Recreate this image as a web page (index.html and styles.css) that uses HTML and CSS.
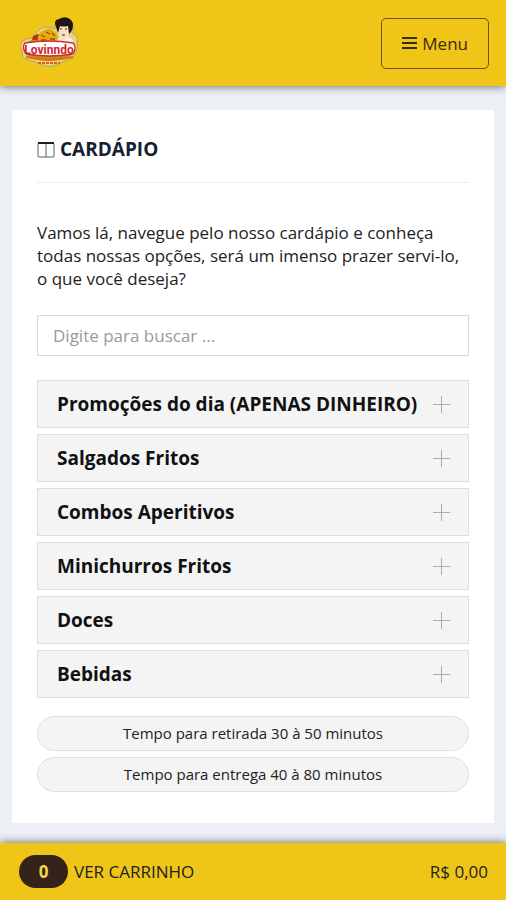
FILE: index.html
```
<!DOCTYPE html>
<html lang="pt-BR">
<head>
  <meta charset="UTF-8" />
  <meta name="viewport" content="width=device-width, initial-scale=1.0"/>
  <title>Cardápio</title>
  <link rel="stylesheet" href="styles.css">
</head>
<body>
  <header class="topbar">
    <svg class="logo" viewBox="0 0 60 54" role="img" aria-label="Lovinndo">
      <path d="M3 25 Q7 22 14 22 L17 17 Q22 10 31 11 L36 13 Q35 4 45 2 Q54 2 54 11 L54 18 Q60 20 58 27 Q60 32 56 37 Q56 42 49 44 L41 47 Q30 54 20 47 L9 44 Q3 42 3 36 Q0 30 3 25Z" fill="#e7d27e" stroke="#b3a464"/>
      <ellipse cx="30" cy="33" rx="26" ry="12" fill="#cf8a10"/>
      <path d="M14 20 L19 18 L23 19 L24 24 L13 24Z" fill="#a93c14"/>
      <path d="M19 26 Q18 16 24 15 Q30 10 35 15 Q40 18 39 26Z" fill="#e9a90b"/>
      <path d="M22 19 L26 21 M27 16 L31 18 M33 17 L36 20 M22 24 L27 24 M31 23 L36 23" stroke="#8d5308" stroke-width="1.3"/>
      <path d="M37 26 L40 21 L44 23 L49 20 L54 24 L54 28 L36 28Z" fill="#f7efe4"/>
      <path d="M39 10 Q44 7 50 10 L50 18 Q47 24 44 24 Q40 21 39 16Z" fill="#f6dfc6"/>
      <path d="M37 11 Q34 4 40 3 Q47 -1 52 4 Q56 9 52 16 L50 18 L49 10 Q44 11 41 10 L39 17Z" fill="#24130e"/>
      <path d="M41 13 h2 M46 13 h2 M43 19 h3" stroke="#4b2418" stroke-width="1"/>
      <path d="M6 27 Q30 23 54 27 Q58 31 54 38 Q30 42 8 38 Q2 32 6 27Z" fill="#fff" stroke="#cf2c27" stroke-width="1.3"/>
      <text class="logo-text" x="30" y="38" text-anchor="middle">Lovinndo</text>
      <path d="M7 41 Q30 46 54 41" fill="none" stroke="#c77d10" stroke-width="2"/>
      <path d="M19 47 H41" stroke="#e85d1a" stroke-width="2" stroke-dasharray="3 1"/>
    </svg>
    <button class="menu-btn" type="button">
      <svg class="menu-icon" viewBox="0 0 15 14" aria-hidden="true">
        <path d="M0 2H15M0 7H15M0 12H15" stroke="currentColor" stroke-width="2"/>
      </svg>
      Menu
    </button>
  </header>

  <main class="container">
    <section class="card">
      <h1 class="card-title">
        <svg class="title-icon" viewBox="0 0 18 18" aria-hidden="true">
          <rect x="1" y="2" width="16" height="14" rx="1" fill="none" stroke="#59616b"/>
          <path d="M9 2V16" stroke="#59616b"/>
          <path d="M1 2H17" stroke="#152033" stroke-width="2"/>
        </svg>
        CARDÁPIO
      </h1>

      <p class="intro">Vamos lá, navegue pelo nosso cardápio e conheça todas nossas opções, será um imenso prazer servi-lo, o que você deseja?</p>

      <input class="search" type="text" aria-label="Digite para buscar" placeholder="Digite para buscar ..." />

      <div class="categories">
        <button class="category" type="button">Promoções do dia (APENAS DINHEIRO)<span class="plus"></span></button>
        <button class="category" type="button">Salgados Fritos<span class="plus"></span></button>
        <button class="category" type="button">Combos Aperitivos<span class="plus"></span></button>
        <button class="category" type="button">Minichurros Fritos<span class="plus"></span></button>
        <button class="category" type="button">Doces<span class="plus"></span></button>
        <button class="category" type="button">Bebidas<span class="plus"></span></button>
      </div>

      <div class="times">
        <div class="time">Tempo para retirada 30 à 50 minutos</div>
        <div class="time">Tempo para entrega 40 à 80 minutos</div>
      </div>
    </section>
  </main>

  <footer class="cart-bar">
    <a class="cart-link" href="#"><span class="cart-count">0</span>VER CARRINHO</a>
    <span>R$ 0,00</span>
  </footer>
</body>
</html>
```
FILE: styles.css
```
* { box-sizing: border-box; }

body {
  margin: 0;
  min-height: 100vh;
  display: flex;
  flex-direction: column;
  font-family: 'Open Sans', sans-serif;
  font-size: 17px;
  color: #222;
  background: #ecf0f4;
}

button,
input {
  font-family: inherit;
  font-size: inherit;
}

.topbar {
  display: flex;
  align-items: center;
  justify-content: space-between;
  height: 86px;
  padding: 0 17px 0 19px;
  background: #efc518;
  box-shadow: 0 1px 8px rgba(0,0,0,0.5);
}

.logo {
  width: 60px;
  height: 54px;
}

.logo-text {
  font-family: Roboto, sans-serif;
  font-size: 12px;
  font-weight: 700;
  fill: #cf2430;
}

.menu-btn {
  display: flex;
  align-items: center;
  gap: 5px;
  height: 51px;
  padding: 0 20px;
  color: #3a2a10;
  background: transparent;
  border: 1px solid #6b5412;
  border-radius: 5px;
  cursor: pointer;
}

.menu-icon {
  width: 15px;
  height: 14px;
}

.container {
  flex: 1;
  padding: 24px 12px 20px;
}

.card {
  padding: 25px 25px 31px;
  background: white;
}

.card-title {
  display: flex;
  align-items: center;
  gap: 5px;
  margin: 0 0 38px;
  padding-bottom: 18px;
  font-size: 19px;
  line-height: 29px;
  color: #152033;
  border-bottom: 1px solid #eee;
}

.title-icon {
  width: 18px;
  height: 18px;
}

.intro {
  margin: 0 0 25px;
  line-height: 23px;
}

.search {
  display: block;
  width: 100%;
  height: 41px;
  margin-bottom: 24px;
  padding: 0 15px;
  border: 1px solid #d5d9dc;
}

.search::placeholder {
  color: #999;
}

.categories,
.times {
  display: flex;
  flex-direction: column;
  gap: 6px;
}

.category {
  display: flex;
  align-items: center;
  justify-content: space-between;
  height: 48px;
  padding: 0 18px 0 19px;
  font-size: 19px;
  font-weight: 700;
  text-align: left;
  color: #111;
  background: #f4f4f4;
  border: 1px solid #dfdfdf;
  cursor: pointer;
}

.plus {
  flex: none;
  width: 17px;
  height: 17px;
  background:
    linear-gradient(#aaa, #aaa) center / 17px 1px no-repeat,
    linear-gradient(#aaa, #aaa) center / 1px 17px no-repeat;
}

.times {
  margin-top: 18px;
}

.time {
  padding: 6px 15px;
  font-size: 15px;
  line-height: 21px;
  text-align: center;
  background: #f4f4f4;
  border: 1px solid #e0e0e0;
  border-radius: 18px;
}

.cart-bar {
  position: sticky;
  bottom: 0;
  display: flex;
  align-items: center;
  justify-content: space-between;
  height: 57px;
  padding: 0 18px 0 19px;
  background: #efc518;
  box-shadow: 0 -1px 8px rgba(0,0,0,0.5);
}

.cart-link {
  display: flex;
  align-items: center;
  gap: 6px;
  color: inherit;
  text-decoration: none;
}

.cart-count {
  width: 49px;
  font-weight: 700;
  line-height: 33px;
  text-align: center;
  color: #f5d54a;
  background: #35231a;
  border-radius: 17px;
}
```
